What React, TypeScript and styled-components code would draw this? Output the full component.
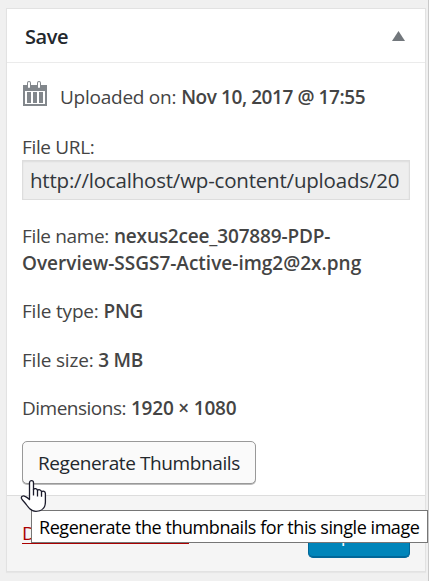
import React from "react";
import styled, { createGlobalStyle } from "styled-components";

const GlobalStyle = createGlobalStyle`
  * { box-sizing: border-box; }
  html, body { margin: 0; height: 100%; overflow: hidden; background: #f0f0f0; }
  body { font-family: "Open Sans", "Noto Sans", sans-serif; font-size: 19px; line-height: 27px; color: #444; }
`;

const Page = styled.main`
  position: relative;
  width: 429px;
  height: 581px;
  padding: 8px 2px 0 6px;
  border-right: 1px solid #c9c9c9;
  overflow: hidden;
`;

const Panel = styled.section`
  width: 420px;
  height: 564px;
  display: flex;
  flex-direction: column;
  background: #fff;
  border: 1px solid #e2e2e2;
  box-shadow: 0 1px 1px rgba(0, 0, 0, 0.04);
`;

const PanelHeader = styled.header`
  display: flex;
  align-items: center;
  justify-content: space-between;
  height: 54px;
  padding: 0 20px 0 18px;
  border-bottom: 1px solid #ebebeb;
`;

const Title = styled.h2`
  margin: 0;
  padding-top: 1px;
  font-size: 20px;
  font-weight: 600;
  letter-spacing: -0.4px;
  color: #23282d;
`;

const Toggle = styled.svg`
  display: block;
  width: 13px;
  height: 10px;
  fill: #72777c;
`;

const Content = styled.div`
  flex: 1;
  padding: 21px 15px 0;
`;

const Row = styled.div<{ $gap: number }>`
  display: flex;
  align-items: flex-start;
  height: 27px;
  margin-bottom: ${(p) => p.$gap}px;
  white-space: nowrap;
`;

const Line = styled.div<{ $gap?: number }>`
  height: 27px;
  margin-bottom: ${(p) => p.$gap ?? 0}px;
  white-space: nowrap;
`;

const Label = styled.span<{ $track?: number }>`
  letter-spacing: ${(p) => p.$track ?? -0.3}px;
`;

const Value = styled.strong<{ $track?: number }>`
  font-weight: 600;
  letter-spacing: ${(p) => p.$track ?? -0.3}px;
`;

const CalendarIcon = styled.svg`
  width: 26px;
  height: 26px;
  margin: -4px 12px 0 0;
`;

const UrlField = styled.div`
  height: 40px;
  margin: 0 0 23px;
  padding: 6px 7px;
  overflow: hidden;
  white-space: nowrap;
  font-size: 20.5px;
  line-height: 27px;
  letter-spacing: -0.2px;
  color: #32373c;
  background: #eee;
  border: 1px solid #ddd;
  box-shadow: inset 0 1px 2px rgba(0, 0, 0, 0.07);
`;

const RegenerateButton = styled.button`
  display: block;
  width: 234px;
  height: 43px;
  margin: 0;
  padding: 1px 0 0 15px;
  text-align: left;
  font: inherit;
  white-space: nowrap;
  letter-spacing: -0.4px;
  color: #23282d;
  background: #fafafa;
  border: 1px solid #999;
  border-radius: 5px;
  box-shadow: 0 1px 0 #bbb;
`;

const Footer = styled.footer`
  display: flex;
  justify-content: space-between;
  height: 76px;
  padding: 19px 15px 0;
  background: #f5f5f5;
  border-top: 1px solid #ddd;
`;

const DeleteLink = styled.a`
  width: 167px;
  height: 29px;
  padding-top: 5px;
  white-space: nowrap;
  letter-spacing: -0.35px;
  color: #a00;
  border-bottom: 1px solid #a00;
`;

const UpdateButton = styled.button`
  width: 102px;
  height: 43px;
  padding: 0 0 3px;
  font: inherit;
  letter-spacing: -0.2px;
  color: #fff;
  background: #0085ba;
  border: 1px solid #006799;
  border-top-color: #0073aa;
  border-radius: 5px;
  box-shadow: inset 0 -1px 0 #006799;
`;

const Tooltip = styled.div`
  position: absolute;
  left: 31px;
  top: 510px;
  width: 397px;
  height: 33px;
  padding: 3px 0 0 7px;
  white-space: nowrap;
  font-size: 18px;
  letter-spacing: -0.44px;
  color: #000;
  background: #fff;
  border: 1px solid #767676;
`;

const Pointer = styled.svg`
  position: absolute;
  left: 20px;
  top: 479px;
  width: 28px;
  height: 34px;
`;

export default function App() {
  return (
    <>
      <GlobalStyle />
      <Page>
        <Panel>
          <PanelHeader>
            <Title>Save</Title>
            <Toggle viewBox="0 0 13 10"><path d="M6.5 0 13 10H0z" /></Toggle>
          </PanelHeader>
          <Content>
            <Row $gap={23}>
              <CalendarIcon viewBox="0 0 26 26">
                <path fill="#82878c" fillRule="evenodd" d="M1 5h4V3q0-2 2-2t2 2v2h6V3q0-2 2-2t2 2v2h6v21H1zM3 11v13h20V11zM6 3v4q0 1 1 1t1-1V3q0-1-1-1t-1 1zM16 3v4q0 1 1 1t1-1V3q0-1-1-1t-1 1z" />
                <path fill="#82878c" d="M5 12h4v11H5zM11 12h4v11h-4zM17 12h4v11h-4z" />
              </CalendarIcon>
              <span><Label $track={-0.25}>Uploaded on:</Label> <Value $track={-0.42}>Nov 10, 2017 @ 17:55</Value></span>
            </Row>
            <Line $gap={-1}><Label $track={-0.35}>File URL:</Label></Line>
            <UrlField>http://localhost/wp-content/uploads/20</UrlField>
            <Line><Label $track={-0.35}>File name:</Label> <Value $track={-0.17}>nexus2cee_307889-PDP-</Value></Line>
            <Line $gap={21}><Value $track={0}>Overview-SSGS7-Active-img2@2x.png</Value></Line>
            <Line $gap={22}><Label $track={-0.2}>File type:</Label> <Value>PNG</Value></Line>
            <Line $gap={21}><Label $track={-0.2}>File size:</Label> <Value>3 MB</Value></Line>
            <Line $gap={19}><Label $track={-0.5}>Dimensions:</Label> <Value $track={-0.2}>1920 × 1080</Value></Line>
            <RegenerateButton>Regenerate Thumbnails</RegenerateButton>
          </Content>
          <Footer>
            <DeleteLink>Delete Permanently</DeleteLink>
            <UpdateButton>Update</UpdateButton>
          </Footer>
        </Panel>
        <Tooltip>Regenerate the thumbnails for this single image</Tooltip>
        <Pointer viewBox="0 0 28 34">
          <path
            fill="#fff"
            stroke="#1b1b2b"
            strokeWidth="1.3"
            strokeLinejoin="round"
            d="M9.500 19.500V3.700C9.500 .9 13.500 .9 13.500 3.700V10.500C14.200 9 17.200 9.300 17.500 11.500C18.500 10 21.300 10.600 21.500 12.800C23 11.500 25.400 12.300 25.400 14.500V23C25.400 29 21.500 32.300 16 32.300C11.500 32.300 9 29.500 7 26.500C5 23.500 2.500 21.500 1.500 19.500C.8 17.500 3 16.300 5 17.300C6.800 18 8.500 19.500 9.500 20.500Z"
          />
          <path fill="none" stroke="#1b1b2b" strokeWidth="1.3" d="M13.500 10v6.500M17.500 11.500v6M21.500 12.800v5" />
        </Pointer>
      </Page>
    </>
  );
}
